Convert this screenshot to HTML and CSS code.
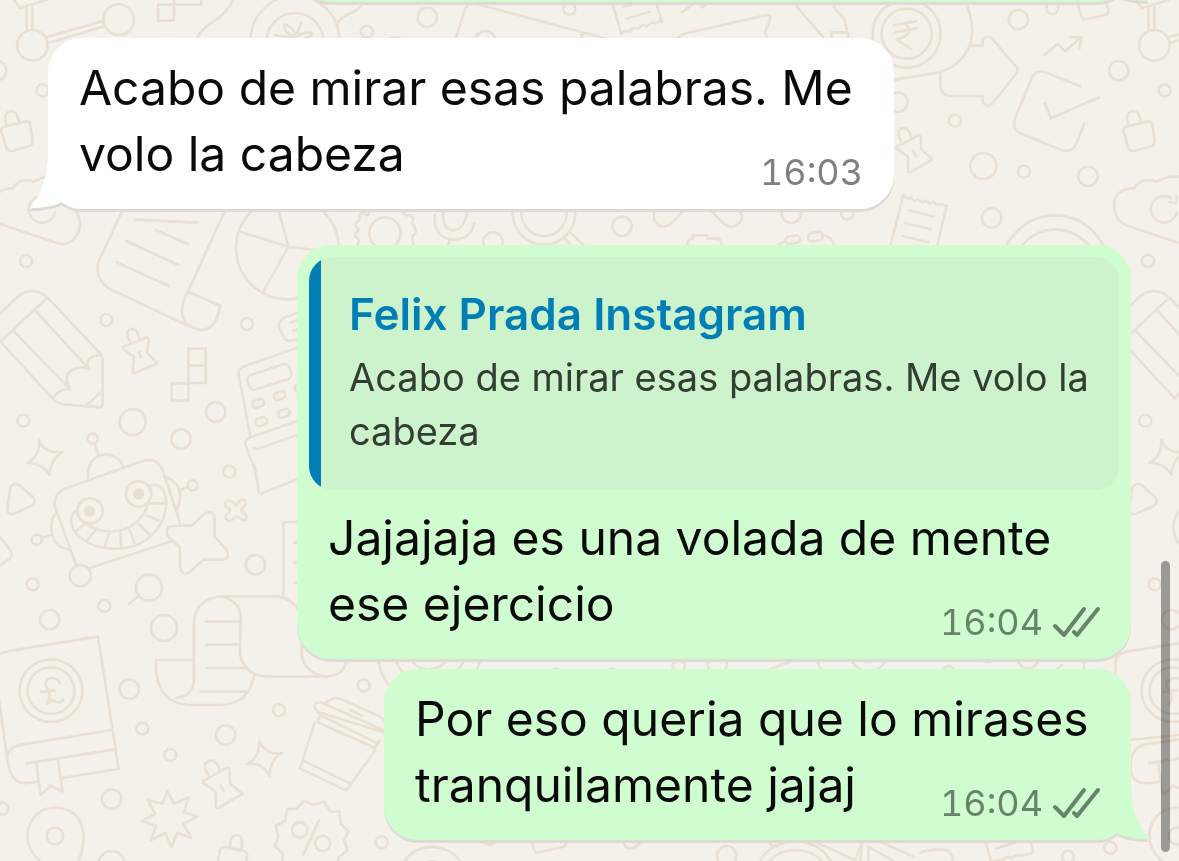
FILE: index.html
```html
<!DOCTYPE html>
<html lang="es">
<head>
<meta charset="utf-8">
<meta name="viewport" content="width=device-width, initial-scale=1">
<title>Chat</title>
<link rel="stylesheet" href="styles.css">
</head>
<body>
<svg class="wallpaper" aria-hidden="true">
  <defs>
    <g id="column">
      <!-- molecule -->
      <circle cx="97" cy="136" r="46"/><circle cx="356" cy="59" r="46"/>
      <path d="M80 24V92M97 22V90M140 112L310 62M146 128L314 79M42 0L60 24L140 0"/>
      <circle cx="-10" cy="212" r="29"/><circle cx="128" cy="271" r="18"/>
      <!-- padlock -->
      <path d="M17 379L78 364Q88 363 91 373L98 423Q99 434 90 438L36 453Q25 455 20 446L4 394Q3 383 17 379ZM20 377L15 355Q16 334 34 333Q48 334 52 350L58 367"/>
      <!-- cloud -->
      <path d="M0 575Q20 563 38 565Q58 532 102 545Q130 528 150 530Q215 545 220 620Q245 650 238 690Q220 735 180 732L10 675Q-110 640 -120 590Q-110 560 -90 560Q-60 530 -30 545Q-15 552 0 575M128 588A40 40 0 1 0 165 638"/>
      <g transform="translate(0 690)">
        <circle cx="78" cy="93" r="18"/><circle cx="319" cy="270" r="18"/>
        <circle cx="70" cy="572" r="18"/>
        <!-- pencil -->
        <path d="M-40 290L48 205Q95 160 145 205L300 370Q308 376 308 390V520Q308 532 298 532L190 523Q170 520 158 506L4 338ZM4 332L140 205M104 240L268 418M38 300L210 478M158 506Q175 475 210 478Q190 440 210 425Q235 405 268 418Q255 400 270 385Q285 372 303 378M260 526L306 484"/>
        <!-- star -->
        <path d="M118 630Q130 670 187 666Q150 690 149 735Q130 700 82 698Q120 680 118 630Z"/>
      </g>
      <g transform="translate(0 1320)">
        <path d="M22 208L30 145Q40 125 58 135L98 170Q112 185 96 197L40 222Q22 225 22 208Z"/>
        <path d="M-20 265L32 332Q40 345 30 355L-20 390"/>
        <circle cx="98" cy="433" r="18"/><circle cx="149" cy="539" r="29"/>
      </g>
      <g transform="translate(0 1860)">
        <!-- book -->
        <path d="M24 430L-20 120Q-5 97 32 92L294 50L356 447L186 474M24 430Q10 380 70 373L336 330M24 430Q35 495 84 489L112 485M80 430L346 388M109 430L122 525L152 497L188 515L174 420"/>
        <circle cx="153" cy="212" r="94"/><circle cx="153" cy="212" r="70"/>
        <path d="M180 190Q172 170 148 175Q125 190 145 210Q155 235 140 252Q155 235 172 247Q185 248 190 238M123 216L164 211"/>
        <circle cx="7" cy="566" r="18"/>
        <path d="M120 723Q80 690 82 640Q95 565 166 563Q240 565 250 640Q252 690 235 723"/>
        <circle cx="165" cy="648" r="25"/>
      </g>
    </g>
  </defs>
  <g transform="scale(0.33333)">
  <use href="#column"/>
  <!-- cloud repeated at the right margin -->
  <g transform="translate(3366 0)">
    <circle cx="97" cy="136" r="46"/><circle cx="356" cy="59" r="46"/>
    <path d="M80 24V92M97 22V90M140 112L310 62M146 128L314 79M42 0L60 24L140 0"/>
    <circle cx="70" cy="1262" r="18"/><circle cx="78" cy="783" r="18"/><circle cx="128" cy="271" r="18"/>
    <path d="M17 379L78 364Q88 363 91 373L98 423Q99 434 90 438L36 453Q25 455 20 446L4 394Q3 383 17 379ZM20 377L15 355Q16 334 34 333Q48 334 52 350L58 367"/>
    <path d="M180 732L10 675Q-30 655 -22 600Q-10 565 36 565Q58 530 104 545Q130 528 171 530M148 594A40 40 0 1 0 165 638M142 606L162 610L165 590"/>
    <g transform="translate(0 690)">
      <path d="M-40 290L48 205Q95 160 145 205L300 370M4 338L158 506M4 332L140 205M104 240L268 418M38 300L210 478M158 506L171 490"/>
      <path d="M118 630Q130 670 187 666Q150 690 149 735Q130 700 82 698Q120 680 118 630Z"/>
    </g>
    <g transform="translate(0 1320)">
      <path d="M22 208L30 145Q40 125 58 135L98 170Q112 185 96 197L40 222Q22 225 22 208Z"/>
      <circle cx="98" cy="433" r="18"/><circle cx="149" cy="539" r="29"/>
      <path d="M171 215Q150 235 156 280Q160 300 171 312"/>
    </g>
    <g transform="translate(0 1860)">
      <path d="M-20 200V130Q-18 97 32 92L171 70M24 360L171 345M84 489Q20 495 26 430Q30 380 70 373L171 358M84 489L112 485M80 430L171 416M109 430L122 525L152 497L171 505"/>
      <circle cx="153" cy="212" r="94"/><circle cx="153" cy="212" r="70"/>
      <path d="M171 176Q150 170 135 185Q130 200 145 210Q155 235 140 252M123 216L164 211"/>
      <path d="M120 723Q80 690 82 640Q95 565 166 563"/>
      <circle cx="165" cy="648" r="25"/>
    </g>
  </g>

  <!-- top strip -->
  <path d="M474 14H522V62H474ZM522 0V14H604V-20M592 114Q605 85 640 65Q680 40 700 0"/>
  <circle cx="885" cy="120" r="133"/><circle cx="885" cy="124" r="85"/>
  <path d="M885 114L858 95Q848 70 858 74Q885 85 885 114L904 68M885 114L824 105M885 114Q900 98 930 98Q945 105 915 114M1010 75Q1020 50 1055 38Q1095 20 1085 0"/>
  <circle cx="1100" cy="95" r="18"/>
  <g transform="translate(1140 0)">
    <circle cx="142" cy="52" r="29"/><circle cx="568" cy="27" r="18"/><circle cx="316" cy="124" r="31"/><circle cx="45" cy="140" r="29"/><circle cx="30" cy="-20" r="31"/>
    <path d="M228 114L254 30Q262 8 290 12L680 116M606 100V116M696 6L724 102Q735 88 748 95Q760 78 775 86Q788 70 800 80Q815 62 826 70Q835 60 846 66L828 6M728 20L782 5M738 56L810 35M906 37L950 4L968 22L1000 0M1013 0V14M890 114Q905 102 930 97L1160 45Q1174 45 1170 58L1156 95L1160 116"/>
  </g>
  <g transform="translate(2340 0)">
    <path d="M48 0Q45 12 52 22L130 112M165 0Q155 18 168 30Q195 55 196 66L205 112M154 114V97H202"/>
    <circle cx="380" cy="101" r="102"/><circle cx="380" cy="101" r="75"/>
    <path d="M340 76L408 64M344 97L410 85M370 70Q395 80 385 100Q375 112 350 118L393 147"/>
    <path d="M555 0C580 60 580 100 572 130C550 185 510 210 470 218L330 242"/>
    <path d="M574 137H608V124Q618 100 636 116L710 202Q716 212 708 222L636 312Q618 325 608 306V288H510Q483 286 482 258V214"/>
    <circle cx="715" cy="59" r="29"/><circle cx="817" cy="24" r="18"/>
    <path d="M892 10L904 50Q908 60 918 58L978 44Q988 40 985 28L978 0"/>
    <path d="M793 166L833 131L855 154L903 112M870 111H904L899 145"/>
    <path d="M900 258L800 218Q770 208 756 232L705 356Q696 385 720 400L845 450Q875 460 888 434L913 370M794 310L813 355L957 292"/>
    <circle cx="1016" cy="212" r="29"/><circle cx="354" cy="307" r="29"/><circle cx="525" cy="362" r="18"/>
    <circle cx="610" cy="498" r="39"/><circle cx="732" cy="515" r="18"/><circle cx="924" cy="529" r="29"/>
    <circle cx="635" cy="654" r="29"/><circle cx="34" cy="640" r="29"/><circle cx="202" cy="641" r="18"/>
    <path d="M362 422Q348 395 362 386Q385 378 393 412M349 440L418 405Q422 406 422 412L424 448L457 478L392 516Q384 518 384 510L384 470L350 446ZM398 452L408 468"/>
    <path d="M332 735L370 585Q380 600 393 592Q402 608 414 598Q425 612 438 602Q448 615 462 605Q470 620 484 612Q490 618 500 618L472 735M386 630L462 650M376 669L454 688M368 708L444 727"/>
    <path d="M680 735Q730 648 825 646Q920 648 970 735M728 735Q765 690 825 688Q885 690 925 735"/>
    <rect x="16" y="708" width="44" height="22" rx="11" transform="rotate(-8 38 719)"/><rect x="84" y="697" width="44" height="26" rx="12" transform="rotate(-8 106 710)"/>
    <path d="M-8 740Q5 725 16 722M130 705Q155 710 162 735"/>
  </g>

  <!-- strip between the first two messages -->
  <g transform="translate(960 570)">
    <path d="M120 58L150 60L144 75Q125 65 118 75Q122 92 108 98Q105 112 118 120Q100 130 108 142Q122 148 112 165M246 60Q250 80 272 75Q285 85 276 100Q290 118 286 130Q270 140 282 165"/>
    <circle cx="195" cy="130" r="47"/><circle cx="519" cy="156" r="29"/><circle cx="906" cy="109" r="29"/>
    <path d="M372 58Q360 118 403 121Q435 118 442 58M344 76Q340 145 403 149Q455 145 462 100M388 150L385 165"/>
    <circle cx="672" cy="70" r="94"/><circle cx="672" cy="70" r="68"/>
    <path d="M752 128L790 165M732 144L752 165M1092 62L1050 104Q1025 120 1005 95Q995 70 1012 50L1100 -35M1170 60L1215 104Q1240 120 1262 95Q1275 70 1240 45M1103 165Q1100 148 1118 146V136H1162V146H1190Q1208 148 1204 165"/>
  </g>

  <!-- parchment, chart and calculator -->
  <g transform="translate(0 690)">
    <circle cx="741" cy="282" r="18"/><circle cx="398" cy="576" r="39"/><circle cx="543" cy="627" r="29"/><circle cx="647" cy="546" r="29"/>
    <path d="M390 334Q374 310 388 298Q410 290 416 322M370 350L440 322Q446 322 446 330L441 368L473 400L403 430Q397 430 398 422L402 382L370 356ZM418 366L422 382"/>
    <path d="M565 356H617V459H565ZM565 407H617M514 460H566V512H514Z"/>
    <path d="M370 -65L298 90Q280 140 325 175L560 285M678 -65L550 215Q538 265 565 285Q620 320 648 270L662 228L568 187M405 -31L592 -22M468 0L563 42M378 33L534 104M350 97L505 167"/>
    <circle cx="862" cy="54" r="154"/>
    <path d="M720 5L865 50L790 185M865 50L835 -63M865 50L1000 68"/>
    <path d="M920 240L855 262Q832 275 838 295L855 328Q870 340 920 318M870 278L910 264M880 302L910 290"/>
    <path d="M900 350L730 410Q714 415 716 432L751 622L735 635Q735 650 765 715L776 785Q776 792 785 790L900 745M751 622L900 570M762 655L770 658L900 612"/>
    <rect x="742" y="418" width="132" height="46" rx="16" transform="rotate(-18 808 441)"/>
    <rect x="758" y="509" width="34" height="22" rx="9" transform="rotate(-18 775 520)"/><rect x="822" y="486" width="34" height="22" rx="9" transform="rotate(-18 839 497)"/>
    <rect x="767" y="564" width="34" height="22" rx="9" transform="rotate(-18 784 575)"/><rect x="835" y="539" width="34" height="22" rx="9" transform="rotate(-18 852 550)"/>
    <rect x="885" y="464" width="34" height="22" rx="9"/>
  </g>

  <!-- robot -->
  <g transform="translate(0 1320)">
    <path d="M228 375L164 198Q160 165 190 148L430 62Q470 52 488 90L540 248M270 384L515 304M264 112Q262 50 315 43Q350 42 368 76M294 40L284 12M168 220Q148 240 156 280Q165 325 208 328M492 108Q535 125 540 160Q542 190 530 208M540 150L564 141M126 294L152 286"/>
    <circle cx="278" cy="-4" r="15"/><circle cx="110" cy="299" r="15"/><circle cx="578" cy="136" r="15"/><circle cx="241" cy="407" r="32"/>
    <circle cx="270" cy="213" r="38"/><circle cx="416" cy="162" r="38"/>
    <circle class="pupil" cx="269" cy="214" r="17"/><circle class="pupil" cx="416" cy="162" r="17"/>
    <path d="M232 210C205 225 208 265 240 292C290 335 390 340 445 295C505 245 505 180 490 150Q475 130 452 136M258 250C300 285 370 280 405 250Q438 222 442 192M230 272L254 252M262 300L290 266M314 322L326 280M364 326L361 276M403 308L389 270M447 282L416 252M478 242L438 226M494 190H446"/>
    <path d="M505 262Q520 255 575 257L610 224Q635 205 644 232V290L680 330Q692 352 670 359H610L572 394Q548 410 540 386V324L505 290Q495 272 505 262Z"/>
    <path d="M707 198Q722 172 734 180Q744 192 726 206Q720 214 736 222Q746 238 730 242L718 234Q708 224 698 238Q682 250 678 234Q676 224 688 216Q694 208 678 200Q670 182 688 182Q698 180 707 198Z"/>
    <circle cx="688" cy="95" r="18"/><circle cx="766" cy="374" r="29"/><circle cx="447" cy="443" r="39"/><circle cx="313" cy="498" r="18"/><circle cx="492" cy="564" r="39"/>
    <path d="M386 493L418 466M900 246H850V468M882 308H900M882 368H900M882 429H900"/>
  </g>

  <!-- scroll, cup and badges -->
  <g transform="translate(0 1860)">
    <path d="M582 180V5Q585 -60 660 -71Q720 -60 722 -10L720 100Q730 165 800 170H980Q1040 165 1040 110M660 -71H830Q905 -60 905 20V100Q910 160 980 170M582 120H468Q462 250 570 255H665Q750 250 762 165M582 180Q578 230 530 233M618 5H720M618 74H720M618 144H738M602 215H738"/>
    <circle cx="388" cy="208" r="29"/><circle cx="427" cy="326" r="18"/><circle cx="511" cy="405" r="18"/><circle cx="677" cy="345" r="29"/><circle cx="837" cy="271" r="18"/><circle cx="1091" cy="196" r="18"/><circle cx="335" cy="537" r="29"/><circle cx="335" cy="732" r="39"/><circle cx="1145" cy="667" r="18"/>
    <path d="M778 363Q800 408 847 400Q812 415 808 468Q790 425 740 432Q780 415 778 363Z"/>
    <path d="M625 466Q606 435 622 425Q645 412 660 450M608 484L682 443Q689 443 688 452L690 490L728 522L655 564Q649 565 648 558L647 515L608 488ZM662 496L671 513"/>
    <path d="M502 513L522 552L565 532L552 577L592 590L550 612L574 654L532 638L514 682L496 640L453 660L468 618L425 602L466 582L443 540L488 552Z"/>
    <path d="M690 678Q690 645 712 645Q732 650 725 685M652 730L660 690Q665 678 680 682L730 692Q742 696 742 708L738 730"/>
    <path d="M862 568L890 566L912 541L940 555L972 545L990 574L1018 575L1022 610L1046 635L1032 660L1042 690L1015 715V730M862 568L855 603L827 618L835 650L824 678L848 700V730M957 602L910 703"/>
    <circle cx="899" cy="630" r="23"/><circle cx="968" cy="670" r="23"/>
    <path d="M1160 340L952 275Q940 262 946 250Q955 245 970 250L1160 335M975 250L1000 236Q1015 232 1030 240L1140 290Q1155 300 1160 320M1050 270L1086 287M962 282L952 306L1125 384L1138 362M960 285L1130 368M944 308L900 445L1038 512L1125 392M910 422L1050 490"/>
  </g>

  <!-- strips around the last message -->
  <g transform="translate(840 1920)">
    <path d="M292 40Q300 120 345 150M340 40Q360 130 470 140M385 40Q400 85 445 90Q490 85 505 50M560 50L535 90M605 50L590 90"/>
    <path d="M375 663Q400 622 458 621Q515 625 540 663M450 663H465"/>
    <circle cx="830" cy="105" r="18"/><circle cx="628" cy="585" r="29"/>
    <path d="M752 595L765 635Q770 640 778 637L850 620Q860 618 858 600"/>
  </g>
  <g transform="translate(1800 1920)">
    <circle cx="236" cy="80" r="18"/><circle cx="352" cy="72" r="29"/><circle cx="38" cy="105" r="18"/><circle cx="806" cy="35" r="58"/><circle cx="806" cy="35" r="30"/><circle cx="1046" cy="97" r="18"/><circle cx="380" cy="647" r="29"/>
    <path d="M510 88L600 55M645 45L662 88M1140 55Q1160 75 1182 60M70 600Q75 635 105 622L130 600M505 595Q510 620 530 620M480 663Q510 606 586 604Q660 606 692 663M508 663Q540 630 586 630Q640 632 665 663M620 595L765 660L790 600M785 620L780 663M805 663V620L880 663M830 600L940 650M962 640Q965 630 1030 628Q1055 632 1060 663"/>
    <path d="M1155 600L1175 670Q1190 655 1205 662Q1220 645 1235 655Q1250 640 1265 648L1300 636L1290 595M1190 625L1260 603M1370 88L1420 108M1370 88L1385 75M1452 55V90"/>
    <circle cx="1284" cy="57" r="29"/><circle cx="1404" cy="650" r="18"/><circle cx="1531" cy="623" r="18"/>
  </g>
  </g>
</svg>

<main class="chat">
  <article class="bubble bubble--out bubble--previous">
    <svg class="tail tail--out" viewBox="0 0 54 60" aria-hidden="true"><path d="M18 0H36C36 28 42 44 54 59C42 59 30 57 22 53L0 30Z"/></svg>
  </article>

  <article class="bubble bubble--in">
    <p class="text">Acabo de mirar esas palabras. Me volo la cabeza <time class="meta">16:03</time></p>
    <svg class="tail tail--in" viewBox="0 0 54 60" aria-hidden="true"><path d="M36 0H18C18 28 12 44 0 59C12 59 24 57 32 53L54 30Z"/></svg>
  </article>

  <article class="bubble bubble--out bubble--reply">
    <blockquote class="quote">
      <cite class="quote-name">Felix Prada Instagram</cite>
      <p class="quote-text">Acabo de mirar esas palabras. Me volo la cabeza</p>
    </blockquote>
    <p class="text">Jajajaja es una volada de mente ese ejercicio <span class="meta"><time>16:04</time><svg class="ticks" viewBox="0 0 47 31" aria-hidden="true"><path d="M2 19L11 28L31 2M21 25L24 28L45 2"/></svg></span></p>
  </article>

  <article class="bubble bubble--out bubble--last">
    <p class="text">Por eso queria que lo mirases tranquilamente jajaj <span class="meta"><time>16:04</time><svg class="ticks" viewBox="0 0 47 31" aria-hidden="true"><path d="M2 19L11 28L31 2M21 25L24 28L45 2"/></svg></span></p>
    <svg class="tail tail--out" viewBox="0 0 54 60" aria-hidden="true"><path d="M18 0H36C36 28 42 44 54 59C42 59 30 57 22 53L0 30Z"/></svg>
  </article>
</main>
<div class="scroll-thumb"></div>
</body>
</html>
```
FILE: styles.css
```css
* { box-sizing: border-box; }

body {
  position: relative;
  display: flow-root;
  margin: 0;
  min-height: 100vh;
  overflow: hidden;
  background: #f4f1ea;
  color: #0a0a0a;
  font-family: Inter, "Liberation Sans", sans-serif;
}

.wallpaper {
  position: absolute;
  inset: 0;
  width: 100%;
  height: 100%;
  fill: none;
  stroke: #eadfd3;
  stroke-width: 8;
  stroke-linecap: round;
  stroke-linejoin: round;
}

.pupil { fill: #eadfd3; stroke: none; }

.chat {
  position: relative;
  display: flex;
  flex-direction: column;
  padding: 0 48px 21px;
}

.bubble {
  position: relative;
  padding: 17px 31px 18px;
  border-radius: 34px;
  filter: drop-shadow(0 3px 0 #dfdad5);
}

.bubble--in {
  --bubble: #ffffff;
  --meta: #808080;
  align-self: flex-start;
  max-width: 846px;
  margin-top: 36px;
  background: var(--bubble);
}

.bubble--out {
  --bubble: #cffdcf;
  --meta: #67836a;
  align-self: flex-end;
  background: var(--bubble);
}

.bubble--previous {
  width: 834px;
  height: 80px;
  margin-top: -78px;
}

.bubble--reply {
  max-width: 834px;
  margin-top: 36px;
  padding: 12px 12px 18px;
}

.bubble--reply .text { margin: 15px 19px 0; }

.bubble--last {
  max-width: 747px;
  margin-top: 10px;
}

.text {
  display: flow-root;
  margin: 0;
  font-size: 48px;
  line-height: 66px;
}

.meta {
  float: right;
  display: flex;
  align-items: center;
  gap: 10px;
  margin-top: 32px;
  color: var(--meta);
  font-size: 36px;
  font-variant-numeric: tabular-nums;
  line-height: 38px;
}

.ticks {
  width: 47px;
  height: 31px;
  overflow: visible;
  fill: none;
  stroke: currentColor;
  stroke-width: 4;
  stroke-linecap: round;
  stroke-linejoin: round;
}

.tail {
  position: absolute;
  bottom: 0;
  width: 54px;
  height: 60px;
  fill: var(--bubble);
}

.tail--in { left: -18px; }
.tail--out { right: -18px; }

.quote {
  margin: 0;
  padding: 30px 24px 32px 40px;
  border-radius: 24px;
  background: linear-gradient(to right, #007eb5 12px, #cdf3cd 12px);
}

.quote-name {
  display: block;
  color: #007eb5;
  font-size: 44px;
  font-style: normal;
  font-weight: 600;
  line-height: 54px;
}

.quote-text {
  margin: 9px 0 0;
  color: #333d33;
  font-size: 38px;
  line-height: 54px;
}

.scroll-thumb {
  position: fixed;
  top: 65.2%;
  right: 9px;
  bottom: 9px;
  width: 9px;
  border-radius: 5px;
  background: rgba(0, 0, 0, 0.36);
}
```
